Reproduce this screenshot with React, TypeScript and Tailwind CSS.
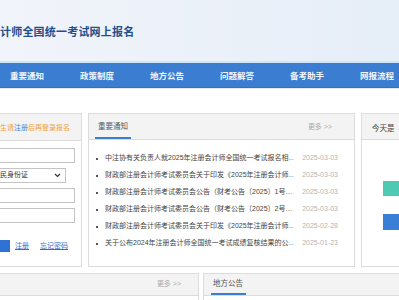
const navItems = ['重要通知', '政策制度', '地方公告', '问题解答', '备考助手', '网报流程'];

const news = [
  { title: '中注协有关负责人就2025年注册会计师全国统一考试报名相…', date: '2025-03-03' },
  { title: '财政部注册会计师考试委员会关于印发《2025年注册会计师…', date: '2025-03-03' },
  { title: '财政部注册会计师考试委员会公告（财考公告〔2025〕1号…', date: '2025-03-03' },
  { title: '财政部注册会计师考试委员会公告（财考公告〔2025〕2号…', date: '2025-03-03' },
  { title: '财政部注册会计师考试委员会关于印发《2025年注册会计师…', date: '2025-02-28' },
  { title: '关于公布2024年注册会计师全国统一考试成绩复核结果的公…', date: '2025-01-23' },
];

function LoginBox() {
  return (
    <div className="w-[82px] shrink-0 h-full border-y border-r border-[#dcdcdc] bg-white flex flex-col">
      <div className="h-[27px] bg-[#f3f3f3] border-b border-[#dcdcdc] flex items-center pt-[3px] text-[7px] text-[#f0a23a] whitespace-nowrap">
        生请<span className="text-[#3a86e0]">注册</span>后再登录报名
      </div>
      <div className="flex flex-col gap-[5px] pt-[7px]">
        <div className="w-[75px] h-[15px] border-y border-r border-[#c4c4c4] bg-white" />
        <div className="w-[66px] h-[15px] border-y border-r border-[#c4c4c4] bg-white flex items-center justify-between pr-[4px] text-[7px] text-[#333]">
          <span>民身份证</span>
          <svg width="7" height="5" viewBox="0 0 7 5">
            <path d="M1 1l2.5 2.5L6 1" fill="none" stroke="#333" strokeWidth="1.2" />
          </svg>
        </div>
        <div className="w-[75px] h-[15px] border-y border-r border-[#c4c4c4] bg-white" />
        <div className="w-[75px] h-[15px] border-y border-r border-[#c4c4c4] bg-white" />
      </div>
      <div className="flex items-center mt-[17px] text-[7px] text-[#2f6bd0]">
        <div className="w-[10px] h-[12px] bg-[#2f72d6]" />
        <span className="ml-[5px] underline">注册</span>
        <span className="ml-[11px] underline">忘记密码</span>
      </div>
    </div>
  );
}

function NewsBox() {
  return (
    <div className="w-[267px] shrink-0 h-full border border-[#dcdcdc] bg-white flex flex-col">
      <div className="h-[26px] bg-[#f3f3f3] border-b border-[#dcdcdc] flex items-end justify-between pl-[6px] pr-[22px]">
        <div className="h-full flex items-end">
          <span className="px-[3px] pb-[4px] border-b-2 border-[#3b7dd1] text-[7.5px] text-[#555] leading-[12px]">重要通知</span>
        </div>
        <span className="pb-[7px] text-[7px] text-[#aaa]">更多 &gt;&gt;</span>
      </div>
      <ul className="pt-[10px] flex flex-col">
        {news.map((n, i) => (
          <li key={i} className="h-[17px] flex items-center pl-[7px] pr-[16px] text-[7px] whitespace-nowrap">
            <span className="w-[2px] h-[2px] bg-[#555] mr-[7px] shrink-0" />
            <span className="flex-1 text-[#444] overflow-hidden">{n.title}</span>
            <span className="text-[#b4b4b4] ml-[8px]">{n.date}</span>
          </li>
        ))}
      </ul>
    </div>
  );
}

function TodayBox() {
  return (
    <div className="w-[120px] shrink-0 h-full border border-[#dcdcdc] bg-white flex flex-col">
      <div className="h-[26px] bg-[#f3f3f3] border-b border-[#dcdcdc] flex items-center pl-[10px] pt-[4px] text-[7.5px] text-[#444]">
        今天是
      </div>
      <div className="pl-[21px] pt-[41px] flex flex-col gap-[18px]">
        <div className="h-[15px] w-[80px] bg-[#4fcab2]" />
        <div className="h-[16px] w-[80px] bg-[#3a7fd6]" />
      </div>
    </div>
  );
}

export default function App() {
  return (
    <div className="w-[399px] h-[300px] overflow-hidden bg-white font-['Liberation_Sans','Noto_Sans_CJK_SC',sans-serif]">
      <header className="h-[61px] bg-gradient-to-r from-[#f1f4fa] to-[#e6eef8] flex items-center pt-[3px]">
        <h1 className="text-[11px] font-bold text-[#1f4f8d] tracking-[0.2px]">计师全国统一考试网上报名</h1>
      </header>
      <div className="h-[2px] bg-[#cfe5f8]" />
      <nav className="h-[25px] bg-[#3b7dd1] flex items-center -ml-[8px] border-b border-[#3370c0]">
        {navItems.map((t) => (
          <div key={t} className="w-[70px] shrink-0 text-center text-[8.5px] font-bold text-[#f2f6fc] pt-[3px]">
            {t}
          </div>
        ))}
      </nav>
      <div className="h-px bg-[#e6e6e6]" />
      <div className="h-[24px]" />
      <div className="flex gap-[6px] h-[154px]">
        <LoginBox />
        <NewsBox />
        <TodayBox />
      </div>
      <div className="flex gap-[4px] mt-[6px] h-[40px]">
        <div className="w-[199px] shrink-0 border-y border-r border-[#dcdcdc]">
          <div className="h-[22px] bg-[#f3f3f3] border-b border-[#dcdcdc] flex items-center justify-end pr-[17px] text-[7px] text-[#aaa]">
            更多 &gt;&gt;
          </div>
        </div>
        <div className="w-[210px] shrink-0 border border-[#dcdcdc]">
          <div className="h-[22px] bg-[#f3f3f3] border-b border-[#dcdcdc] flex items-end pl-[7px]">
            <span className="px-[2px] pb-[3px] border-b-2 border-[#3b7dd1] text-[7.5px] text-[#555] leading-[12px] w-[35px]">地方公告</span>
          </div>
        </div>
      </div>
    </div>
  );
}
